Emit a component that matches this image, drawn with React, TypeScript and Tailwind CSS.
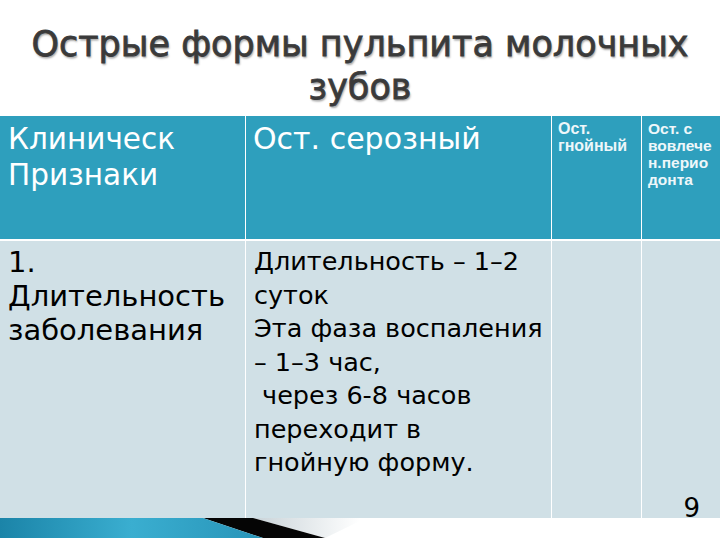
import React from "react";

const rows = [
  "Длительность – 1–2",
  "суток",
  "Эта фаза воспаления",
  "– 1–3 час,",
  "\u00a0через 6-8 часов",
  "переходит в",
  "гнойную форму.",
];

export default function App() {
  return (
    <div className="relative w-[720px] h-[540px] overflow-hidden bg-white font-['DejaVu_Sans',sans-serif]">
      <h1 className="h-[116px] pt-[23px] text-center text-[35px] leading-[43px] text-[#3a3a3a] [-webkit-text-stroke:0.8px_#3a3a3a] [text-shadow:1px_2px_2px_rgba(0,0,0,0.35)]">
        Острые формы пульпита молочных
        <br />
        зубов
      </h1>

      <div className="grid grid-cols-[246px_306px_90px_1fr] grid-rows-[123px_279px]">
        <div className="bg-[#2e9fbd] border-r border-white px-2 pt-[5px] text-[29.5px] leading-[36px] text-white">
          Клиническ
          <br />
          Признаки
        </div>
        <div className="bg-[#2e9fbd] border-r border-white px-[7px] pt-[5px] text-[30px] leading-[36px] text-white">
          Ост. серозный
        </div>
        <div className="bg-[#2e9fbd] border-r border-white px-[6px] pt-[4px] text-[16px] leading-[17px] font-bold text-[#eef7fa] font-['Liberation_Sans',sans-serif]">
          Ост.
          <br />
          гнойный
        </div>
        <div className="bg-[#2e9fbd] px-[6px] pt-[4px] text-[15.5px] leading-[17px] font-bold text-[#eef7fa] font-['Liberation_Sans',sans-serif]">
          Ост. с
          <br />
          вовлече
          <br />
          н.перио
          <br />
          донта
        </div>

        <div className="bg-[#d0e0e6] border-r border-white border-t-2 border-t-white px-2 pt-[4px] text-[29px] leading-[34px] text-black">
          1.
          <br />
          Длительность
          <br />
          заболевания
        </div>
        <div className="bg-[#d0e0e6] border-r border-white border-t-2 border-t-white px-[8px] pt-[4px] text-[25.5px] leading-[33.5px] text-black whitespace-nowrap">
          {rows.map((r) => (
            <div key={r}>{r}</div>
          ))}
        </div>
        <div className="bg-[#d0e0e6] border-r border-white border-t-2 border-t-white" />
        <div className="bg-[#d0e0e6] border-t-2 border-t-white" />
      </div>

      <div className="absolute right-[20px] bottom-[19px] text-[26px] leading-none text-black">9</div>

      <svg className="block" width="720" height="20" viewBox="0 0 720 20">
        <defs>
          <linearGradient id="blue" x1="0" y1="0" x2="1" y2="0">
            <stop offset="0" stopColor="#1b84a8" />
            <stop offset="0.5" stopColor="#3aaed0" />
            <stop offset="1" stopColor="#2894b8" />
          </linearGradient>
          <linearGradient id="grey" x1="0" y1="0" x2="1" y2="0">
            <stop offset="0" stopColor="#c9d3d8" />
            <stop offset="1" stopColor="#ffffff" />
          </linearGradient>
        </defs>
        <polygon points="253,0 360,0 360,3 325,20" fill="url(#grey)" />
        <polygon points="203,0 253,0 325,20 263,20" fill="#050505" />
        <polygon points="0,0 203,0 263,20 0,20" fill="url(#blue)" />
      </svg>
    </div>
  );
}
